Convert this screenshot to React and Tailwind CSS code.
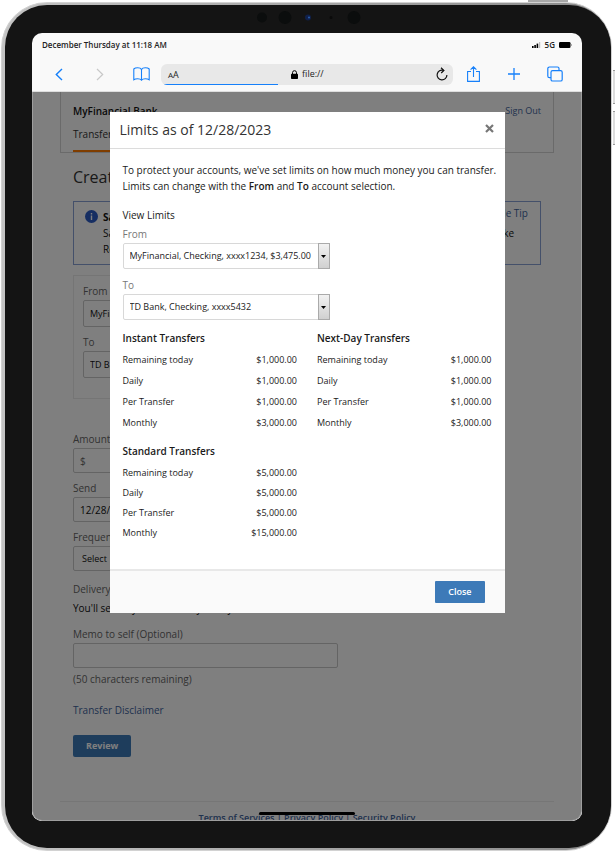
import React from "react";

const FROM_ACCOUNT = "MyFinancial, Checking, xxxx1234, $3,475.00";
const TO_ACCOUNT = "TD Bank, Checking, xxxx5432";

const instant = [
  ["Remaining today", "$1,000.00"],
  ["Daily", "$1,000.00"],
  ["Per Transfer", "$1,000.00"],
  ["Monthly", "$3,000.00"],
];

const standard = [
  ["Remaining today", "$5,000.00"],
  ["Daily", "$5,000.00"],
  ["Per Transfer", "$5,000.00"],
  ["Monthly", "$15,000.00"],
];

function StatusBar() {
  return (
    <div className="flex h-6 items-center justify-between pl-[10px] pr-[10px] text-[8px] font-semibold text-[#222]">
      <span>December Thursday at 11:18 AM</span>
      <span className="flex items-center gap-1">
        <svg className="h-[6px] w-[9px]" viewBox="0 0 9 6">
          <rect x="0" y="4" width="1.6" height="2" />
          <rect x="2.3" y="3" width="1.6" height="3" />
          <rect x="4.6" y="1.6" width="1.6" height="4.4" />
          <rect x="7" y="0" width="1.2" height="6" fill="#bbb" />
        </svg>
        <span>5G</span>
        <svg className="h-[6px] w-[13px]" viewBox="0 0 13 6">
          <rect width="11.5" height="6" rx="1.2" />
          <rect x="12" y="2" width="0.8" height="2" fill="#999" />
        </svg>
      </span>
    </div>
  );
}

function ToolButton({ label, children }) {
  return (
    <button type="button" aria-label={label} className="flex h-6 w-6 items-center justify-center text-[#1680fa]">
      {children}
    </button>
  );
}

function Toolbar() {
  return (
    <div className="flex h-[34px] items-center gap-2 px-[15px]">
      <div className="flex gap-[17px]">
        <ToolButton label="Back">
          <svg className="h-[13px] w-2" viewBox="0 0 8 13" fill="none" stroke="currentColor" strokeWidth="1.4">
            <path d="M7 1 1.3 6.5 7 12" />
          </svg>
        </ToolButton>
        <ToolButton label="Forward">
          <svg className="h-[13px] w-2" viewBox="0 0 8 13" fill="none" stroke="#c8c8c8" strokeWidth="1.2">
            <path d="m1 1 5.7 5.5L1 12" />
          </svg>
        </ToolButton>
        <ToolButton label="Bookmarks">
          <svg className="h-[14px] w-[17px]" viewBox="0 0 17 14" fill="none" stroke="currentColor" strokeWidth="1.1">
            <path d="M8.5 2.6C7.8 1.2 6.3.8 4.7.8 3 .8 1.6 1.2.8 2v10.8c1-.7 2.4-1 3.9-1s3 .3 3.8 1.4c.8-1.1 2.3-1.4 3.8-1.4s2.9.3 3.9 1V2c-.8-.8-2.2-1.2-3.9-1.2-1.6 0-3.1.4-3.8 1.8Zm0 0v10.6" />
          </svg>
        </ToolButton>
      </div>
      <div className="relative flex h-[21px] flex-1 items-center justify-between overflow-hidden rounded-md bg-[#e8e8e8] pl-[7px] pr-[5px] text-[#222]">
        <button type="button" aria-label="Text size" className="flex items-baseline text-[9px] leading-none">
          <span className="text-[8px]">A</span>A
        </button>
        <span className="flex items-center gap-1 text-[9px]">
          <svg className="h-[9px] w-[7px]" viewBox="0 0 7 9">
            <path d="M1.5 4V2.7a2 2 0 0 1 4 0V4" fill="none" stroke="#000" strokeWidth="1" />
            <rect y="3.8" width="7" height="5.2" rx="0.8" />
          </svg>
          file://
        </span>
        <button type="button" aria-label="Reload">
          <svg className="h-[14px] w-3" viewBox="0 0 12 14" fill="none" stroke="#111" strokeWidth="1.2">
            <path d="M7.5 3.4A4.9 4.9 0 1 0 10.9 8M5 .7l2.9 2.7L5.2 6" />
          </svg>
        </button>
        <span className="absolute bottom-0 left-[3px] h-px w-[39%] bg-[#1680fa]" />
      </div>
      <div className="flex gap-[17px]">
        <ToolButton label="Share">
          <svg className="h-4 w-[13px]" viewBox="0 0 13 16" fill="none" stroke="currentColor" strokeWidth="1.1">
            <path d="M4 5.5H.6v9.9h11.8V5.5H9M6.5 11V1M3.6 3.7 6.5.8l2.9 2.9" />
          </svg>
        </ToolButton>
        <ToolButton label="New tab">
          <svg className="h-3 w-3" viewBox="0 0 12 12" stroke="currentColor" strokeWidth="1.3">
            <path d="M6 0v12M0 6h12" />
          </svg>
        </ToolButton>
        <ToolButton label="Tabs">
          <svg className="h-4 w-4" viewBox="0 0 16 16" fill="none" stroke="currentColor" strokeWidth="1.2">
            <rect x="4" y="4.6" width="11.2" height="10.4" rx="1.6" />
            <path d="M4 11.6H2.4A1.6 1.6 0 0 1 .8 10V2.6A1.6 1.6 0 0 1 2.4 1h8a1.6 1.6 0 0 1 1.6 1.6v2" />
          </svg>
        </ToolButton>
      </div>
    </div>
  );
}

function PageField({ label, id, children, className = "" }) {
  return (
    <div className={"flex flex-col gap-px " + className}>
      <label htmlFor={id} className="text-[#666]">
        {label}
      </label>
      {children}
    </div>
  );
}

const box = "w-full appearance-none rounded-[2px] border border-[#c8c8c8] bg-white";

function TransferPage() {
  return (
    <div className="px-7 text-[10px] leading-4 text-[#111]">
      <header className="border-x border-b border-[#d4d4d4] px-3 pt-[11px]">
        <div className="flex justify-between">
          <span className="font-semibold">MyFinancial Bank</span>
          <a href="#out" className="text-[9px] text-[#3f639c]">
            Sign Out
          </a>
        </div>
        <nav className="flex pt-[7px]">
          <a href="#transfers" className="border-b-2 border-[#ff7a00] pb-2 pr-6 text-[#333]">
            Transfers
          </a>
        </nav>
      </header>

      <main className="px-[13px]">
        <h1 className="mt-3 text-[16px] leading-6 text-[#333]">Create Transfer</h1>

        <section className="mt-3 flex gap-[5px] border border-[#88a0d4] py-[7px] pl-[11px] pr-3">
          <svg className="mt-px h-[13px] w-[13px] shrink-0" viewBox="0 0 13 13">
            <circle cx="6.5" cy="6.5" r="6.5" fill="#2c5cc5" />
            <path d="M6.5 5.4V10M6.5 3v1.5" stroke="#fff" strokeWidth="1.4" />
          </svg>
          <div className="flex-1">
            <div className="flex justify-between">
              <strong>Save time on transfers</strong>
              <a href="#tip" className="-mt-1 text-[#3f639c]">
                Hide Tip
              </a>
            </div>
            <div className="flex justify-between pr-[14px]">
              <span>Save the transfers you often</span>
              <span>make</span>
            </div>
            <p>Review them first.</p>
          </div>
        </section>

        <fieldset className="mt-[10px] w-[285px] border border-[#ebebeb] px-[9px] pb-5 pt-[7px]">
          <PageField id="page-from" label="From">
            <select id="page-from" className={box + " h-[27px] px-[6px] text-[9px]"}>
              <option>{FROM_ACCOUNT}</option>
            </select>
          </PageField>
          <PageField id="page-to" label="To" className="mt-[7px]">
            <select id="page-to" className={box + " h-[27px] px-[6px] text-[9px]"}>
              <option>{TO_ACCOUNT}</option>
            </select>
          </PageField>
        </fieldset>

        <div className="flex w-[265px] flex-col">
          <PageField id="amount" label="Amount" className="mt-8">
            <input id="amount" placeholder="$" className={box + " h-[25px] px-[6px] placeholder:text-[#666]"} />
          </PageField>
          <PageField id="send" label="Send" className="mt-[7px]">
            <input id="send" defaultValue="12/28/2023" className={box + " h-[25px] px-[6px]"} />
          </PageField>
          <PageField id="frequency" label="Frequency" className="mt-[7px]">
            <select id="frequency" className={box + " h-[25px] px-2 text-[9px]"}>
              <option>Select</option>
            </select>
          </PageField>
          <span className="mt-[10px] text-[#666]">Delivery</span>
          <span className="mt-[3px]">You'll send by 28, arrives by Friday</span>
          <PageField id="memo" label="Memo to self (Optional)" className="mt-[10px]">
            <input id="memo" className={box + " h-[25px] px-[6px]"} />
          </PageField>
          <span className="mt-[3px] text-[#666]">(50 characters remaining)</span>
          <a href="#disclaimer" className="mt-[15px] self-start text-[#3f639c]">
            Transfer Disclaimer
          </a>
          <button type="button" className="mt-[17px] h-[22px] self-start rounded-[2px] bg-[#3d7ab8] px-[13px] text-[9px] font-bold text-white">
            Review
          </button>
        </div>
      </main>

      <footer className="mt-11 border-t border-[#ececec] pt-2 text-center text-[9px] font-semibold text-[#3f639c]">
        <a href="#terms">Terms of Services</a> | <a href="#privacy">Privacy Policy</a> | <a href="#security">Security Policy</a>
      </footer>
    </div>
  );
}

function AccountSelect({ id, label, value, className = "" }) {
  return (
    <div className={"flex w-[207px] flex-col gap-px " + className}>
      <label htmlFor={id} className="text-[#777]">
        {label}
      </label>
      <div className="relative">
        <select id={id} className="h-[26px] w-full appearance-none rounded-[2px] border border-[#d8d8d8] bg-white pl-[6px] pr-3 text-[9px] text-[#222]">
          <option>{value}</option>
        </select>
        <span className="pointer-events-none absolute inset-y-0 right-0 flex w-3 items-center justify-center border border-[#aaa] bg-linear-to-b from-[#f2f2f2] to-[#d0d0d0]">
          <svg className="h-[3px] w-[5px]" viewBox="0 0 5 3">
            <path d="M0 0h5L2.5 3Z" />
          </svg>
        </span>
      </div>
    </div>
  );
}

function LimitTable({ title, rows, rowClass, titleClass }) {
  return (
    <div>
      <h3 className={"text-[10px] font-semibold leading-4 " + titleClass}>{title}</h3>
      <table className="w-full text-[9px]">
        <tbody>
          {rows.map(([name, amount]) => (
            <tr key={name} className={rowClass}>
              <th scope="row" className="p-0 text-left font-normal">
                {name}
              </th>
              <td className="p-0 text-right">{amount}</td>
            </tr>
          ))}
        </tbody>
      </table>
    </div>
  );
}

function LimitsDialog() {
  return (
    <div role="dialog" aria-labelledby="limits-title" className="w-[395px] max-w-full self-start bg-white text-[10px] leading-4 text-[#1a1a1a]">
      <div className="flex h-[37px] items-center justify-between border-b border-[#dcdcdc] pl-[10px] pr-[11px]">
        <h2 id="limits-title" className="text-[14px] text-[#333]">
          Limits as of 12/28/2023
        </h2>
        <button type="button" aria-label="Dismiss" className="-mt-1 text-[#777]">
          <svg className="h-[9px] w-[9px]" viewBox="0 0 9 9" stroke="currentColor" strokeWidth="2.2">
            <path d="m1 1 7 7M8 1 1 8" />
          </svg>
        </button>
      </div>

      <div className="pb-[26px] pl-[13px] pt-[13px]">
        <p>To protect your accounts, we've set limits on how much money you can transfer.</p>
        <p>
          Limits can change with the <strong className="font-semibold">From</strong> and{" "}
          <strong className="font-semibold">To</strong> account selection.
        </p>
        <p className="mt-[13px]">View Limits</p>
        <AccountSelect id="limit-from" label="From" value={FROM_ACCOUNT} className="mt-[3px]" />
        <AccountSelect id="limit-to" label="To" value={TO_ACCOUNT} className="mt-2" />
        <div className="mr-[13px] mt-[10px] grid grid-cols-2 gap-x-5 gap-y-[10px]">
          <LimitTable title="Instant Transfers" rows={instant} rowClass="h-[21px]" titleClass="mb-[3px]" />
          <LimitTable title="Next-Day Transfers" rows={instant} rowClass="h-[21px]" titleClass="mb-[3px]" />
          <LimitTable title="Standard Transfers" rows={standard} rowClass="h-5" titleClass="mb-1" />
        </div>
      </div>

      <div className="flex justify-end border-t-2 border-[#e8e8e8] bg-[#fafafa] px-5 py-[10px]">
        <button type="button" className="h-[22px] rounded-[1px] bg-[#3d7ab8] px-[13px] text-[9px] font-semibold text-white">
          Close
        </button>
      </div>
    </div>
  );
}

export default function App() {
  return (
    <div className="relative flex h-screen bg-white pb-px pl-px pr-[3px] pt-[2px] font-['Open_Sans','Noto_Sans',sans-serif]">
      {/* Hardware buttons on the edge of the tablet */}
      <span className="absolute right-[47px] top-0 h-[2px] w-10 bg-[#a8a8a8]" />
      <span className="absolute right-0 top-[70px] h-[34px] w-[2px] border-y border-[#999] bg-[#ddd]" />
      <span className="absolute right-0 top-[111px] h-[34px] w-[2px] border-y border-[#999] bg-[#ddd]" />

      <div className="flex flex-1 rounded-[46px] border border-[#d2d2d2] bg-linear-to-r from-[#c4c4c4] to-[#8a8a8a] pb-[2px] pl-[3px] pt-[2px]">
        <div className="relative flex flex-1 rounded-[42px] bg-[#141414] pb-[27px] pl-[27px] pr-[29px] pt-[28px]">
          {/* Camera array */}
          <svg className="absolute left-1/2 top-[5px] h-4 w-28 -translate-x-1/2" viewBox="0 0 112 16">
            <circle cx="10" cy="7.5" r="5" fill="#0b0d0d" />
            <circle cx="33" cy="7.5" r="6.5" fill="#0b0d0d" />
            <circle cx="56" cy="7.5" r="3" fill="#10204a" />
            <circle cx="57" cy="7.5" r="1" fill="#2a5fae" />
            <circle cx="79" cy="7.5" r="1.5" fill="#0a0a0a" />
            <circle cx="102" cy="7.5" r="6.5" fill="#0b0d0d" />
          </svg>

          <div className="relative flex min-w-0 flex-1 flex-col overflow-hidden rounded-[10px] bg-[#f9f9f9]">
            <StatusBar />
            <Toolbar />
            <div className="h-px shrink-0 bg-[#dedede]" />
            <div className="relative min-h-0 flex-1 overflow-hidden bg-white">
              <TransferPage />
              <div className="absolute inset-0 flex justify-center rounded-b-[10px] border-x border-b border-[#9e9e9e] bg-black/50 pt-5">
                <LimitsDialog />
              </div>
              <span className="absolute bottom-[6px] left-1/2 h-[3px] w-24 -translate-x-1/2 rounded-full bg-black" />
            </div>
          </div>
        </div>
      </div>
    </div>
  );
}
